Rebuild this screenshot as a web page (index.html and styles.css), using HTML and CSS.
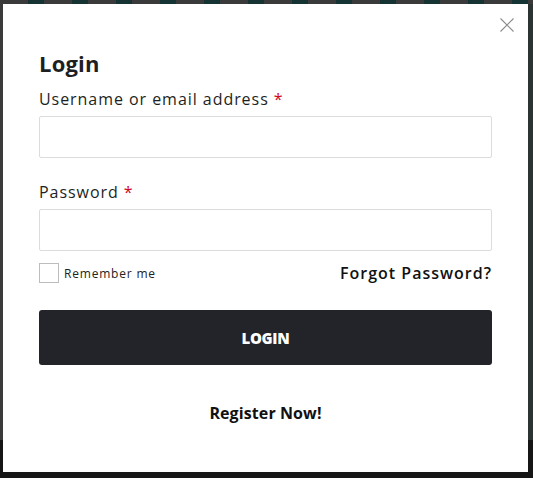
FILE: index.html
```html
<!DOCTYPE html>
<html lang="en">
<head>
<meta charset="utf-8">
<title>Login</title>
<link rel="stylesheet" href="styles.css">
</head>
<body>
<div class="backdrop">
  <div class="strip"></div>
  <div class="modal">
    <button class="close" aria-label="Close">
      <svg width="14" height="14" viewBox="0 0 14 14"><path d="M0.5 0.5 L13.5 13.5 M13.5 0.5 L0.5 13.5" stroke="#8a8a8a" stroke-width="1.1" fill="none"/></svg>
    </button>
    <h2 class="title">Login</h2>
    <form class="form">
      <label class="label">Username or email address <span class="req">*</span></label>
      <input class="input" type="text">
      <label class="label label-pw">Password <span class="req">*</span></label>
      <input class="input" type="password">
      <div class="row">
        <label class="remember"><span class="box"></span><span>Remember me</span></label>
        <a class="forgot">Forgot Password?</a>
      </div>
      <button class="btn" type="button">LOGIN</button>
      <a class="register">Register Now!</a>
    </form>
  </div>
</div>
</body>
</html>
```
FILE: styles.css
```css
* { box-sizing: border-box; }
html, body { margin: 0; padding: 0; }
body {
  width: 533px;
  height: 478px;
  overflow: hidden;
  background: #1c1c1c;
  font-family: "Open Sans", "Liberation Sans", sans-serif;
  color: #1d1f22;
}
.backdrop {
  position: relative;
  width: 533px;
  height: 478px;
  padding: 4px 5px 6px 3px;
  background:
    linear-gradient(to bottom, transparent 0 440px, #161616 440px 100%),
    linear-gradient(to right, #3a3a3a 0 3px, #2b3433 3px 100%);
}
.strip {
  position: absolute;
  left: 0; top: 0; right: 0; height: 4px;
  background: repeating-linear-gradient(to right, #3a3a3a 0 28px, #163333 28px 44px);
}
.modal {
  position: relative;
  width: 525px;
  height: 468px;
  background: #fff;
  padding: 44px 36px 0 36px;
}
.close {
  position: absolute;
  top: 14px;
  right: 14px;
  width: 14px;
  height: 14px;
  padding: 0;
  border: 0;
  background: none;
  display: flex;
}
.title {
  margin: 0 0 11px 0;
  font-size: 22px;
  line-height: 30px;
  font-weight: 700;
  letter-spacing: 0.2px;
}
.form { display: flex; flex-direction: column; }
.label {
  font-size: 16px;
  line-height: 20px;
  font-weight: 400;
  letter-spacing: 0.95px;
  margin-bottom: 7px;
}
.label-pw { margin-top: 24px; }
.req { color: #d0021b; }
.input {
  width: 100%;
  height: 42px;
  border: 1px solid #dcdcdc;
  border-radius: 2px;
  background: #fff;
  margin: 0;
}
.row {
  display: flex;
  justify-content: space-between;
  align-items: center;
  margin-top: 12px;
  height: 20px;
}
.remember {
  display: flex;
  align-items: center;
  gap: 5px;
  font-size: 12px;
  letter-spacing: 0.8px;
  color: #222;
}
.box {
  width: 20px;
  height: 20px;
  border: 1px solid #bdbdbd;
  background: #fff;
}
.forgot {
  font-size: 16px;
  font-weight: 600;
  letter-spacing: 1px;
  color: #111;
}
.btn {
  margin-top: 27px;
  height: 55px;
  border: 0;
  border-radius: 3px;
  background: #222429;
  color: #fff;
  font-family: inherit;
  font-size: 15px;
  font-weight: 800;
  letter-spacing: -0.3px;
}
.register {
  align-self: center;
  margin-top: 37px;
  font-size: 16px;
  font-weight: 700;
  color: #111;
  letter-spacing: 0.1px;
}
```
